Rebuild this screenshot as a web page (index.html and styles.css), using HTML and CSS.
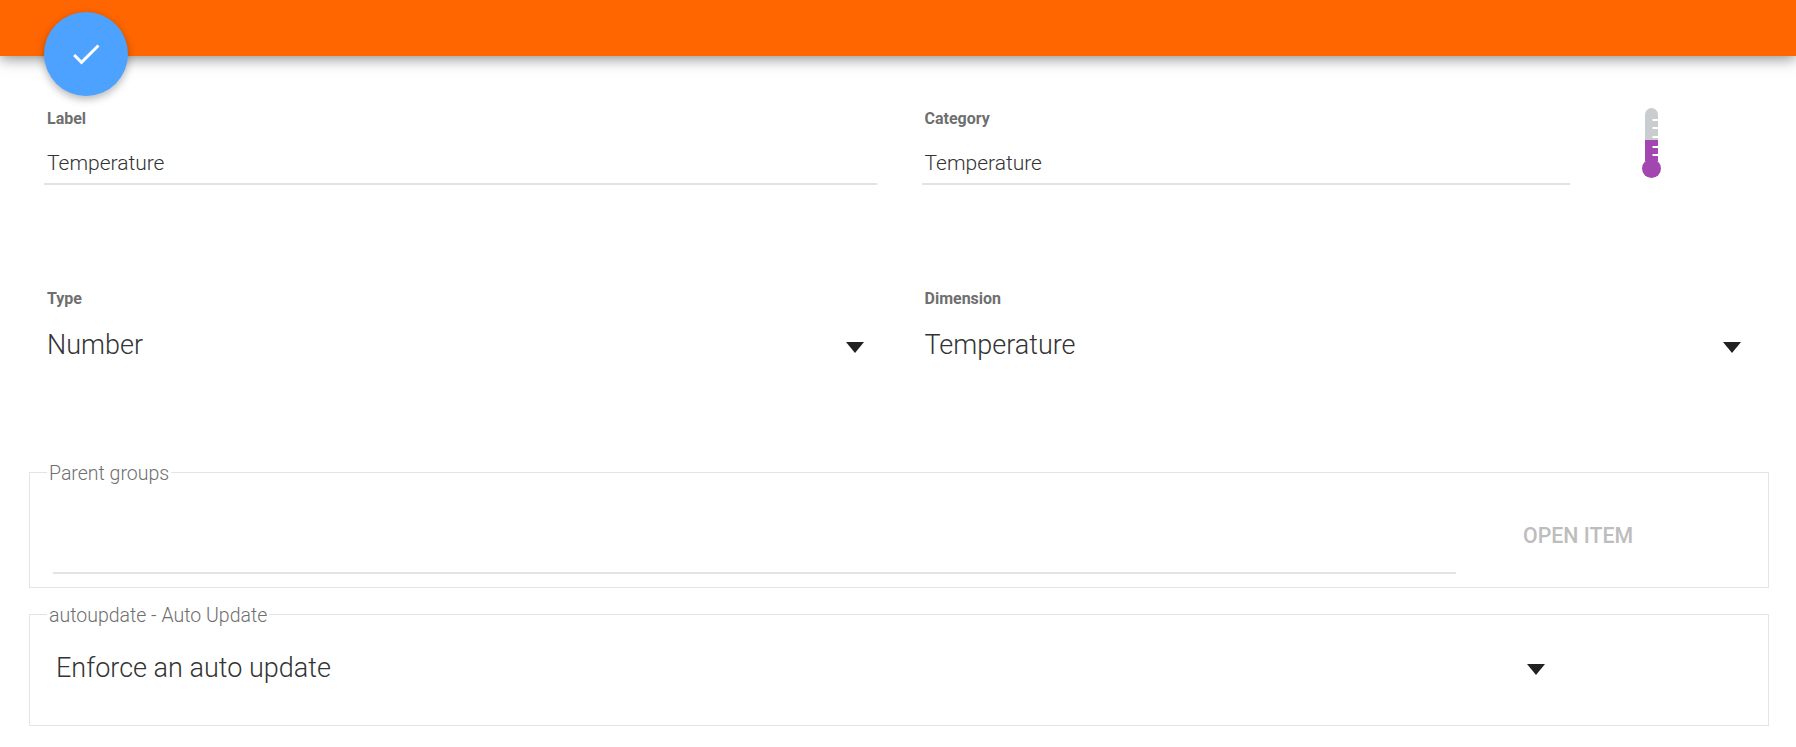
FILE: index.html
```html
<!DOCTYPE html>
<html lang="en">
<head>
<meta charset="utf-8">
<title>Item</title>
<link rel="stylesheet" href="styles.css">
</head>
<body>
<header class="topbar"></header>
<button class="fab" aria-label="Save">
  <svg class="fab-icon" viewBox="0 0 24 24"><path d="M9 16.17L4.83 12l-1.42 1.41L9 19 21 7l-1.41-1.41z"/></svg>
</button>
<main class="form">
  <section class="row row-text">
    <div class="field field-label">
      <div class="field-title">Label</div>
      <div class="field-value">Temperature</div>
    </div>
    <div class="field field-category">
      <div class="field-title">Category</div>
      <div class="field-value">Temperature</div>
    </div>
    <svg class="thermo" viewBox="0 0 20 72">
      <path class="thermo-empty" d="M3 32V6.500a6.500 6.500 0 0 1 13 0V32z"/>
      <path class="thermo-fill" d="M3 32h13v21h-13z"/>
      <circle class="thermo-fill" cx="9.500" cy="60.500" r="9.500"/>
      <path class="thermo-ticks" d="M10.500 11h5.500v2h-5.500zM10.500 19h5.500v2h-5.500zM10.500 28h5.500v2h-5.500zM10.500 38h5.500v2h-5.500zM10.500 46h5.500v2h-5.500z"/>
    </svg>
  </section>
  <section class="row row-select">
    <div class="select select-type">
      <div class="select-body">
        <div class="field-title">Type</div>
        <div class="select-value">Number</div>
      </div>
      <span class="arrow"></span>
    </div>
    <div class="select select-dim">
      <div class="select-body">
        <div class="field-title">Dimension</div>
        <div class="select-value">Temperature</div>
      </div>
      <span class="arrow"></span>
    </div>
  </section>
  <fieldset class="group group-parent">
    <legend class="group-title">Parent groups</legend>
    <div class="group-input"></div>
    <div class="open-item">OPEN ITEM</div>
  </fieldset>
  <fieldset class="group group-auto">
    <legend class="group-title">autoupdate - Auto Update</legend>
    <div class="auto-row">
      <div class="select-value">Enforce an auto update</div>
      <span class="arrow"></span>
    </div>
  </fieldset>
</main>
</body>
</html>
```
FILE: styles.css
```css
* { box-sizing: border-box; }
html, body { margin: 0; padding: 0; background: #fff; overflow: hidden; }
body { height: 747px; font-family: Roboto, "Liberation Sans", sans-serif; color: #333; position: relative; }

.topbar {
  height: 56px;
  background: #ff6600;
  box-shadow: 0 2px 14px rgba(0,0,0,.5);
}

.fab {
  position: absolute;
  left: 44px;
  top: 12px;
  width: 84px;
  height: 84px;
  border: 0;
  border-radius: 50%;
  background: #4da2ff;
  box-shadow: 0 3px 8px rgba(0,0,0,.3);
  display: flex;
  align-items: center;
  justify-content: center;
  padding: 0;
}
.fab-icon { width: 36px; height: 36px; fill: #fff; }

.form { display: flex; flex-direction: column; }

.row { display: flex; }
.row-text { height: 165px; padding: 53px 0 0 44px; }
.row-select { height: 239px; padding-left: 44px; padding-top: 68px; }

.field { height: 76px; border-bottom: 2px solid #e3e3e3; padding-left: 3px; }
.field-label { width: 833px; margin-right: 45px; }
.field-category { width: 648px; padding-left: 2.500px; }

.field-title { font-size: 16px; font-weight: 700; line-height: 20px; color: #6f6f6f; }
.field-value { font-size: 21px; font-weight: 300; line-height: 28px; margin-top: 20px; color: #333; }

.thermo { width: 20px; height: 72px; margin: -1px 0 0 71.500px; flex: none; }
.thermo-empty { fill: #c9cdcf; }
.thermo-fill { fill: #a347b0; }
.thermo-ticks { fill: #fff; }

.select { display: flex; justify-content: space-between; padding-left: 3px; }
.select-type { width: 833px; margin-right: 45px; padding-right: 13px; }
.select-dim { width: 834px; padding-left: 2.500px; padding-right: 15px; }
.select-body { flex: 1; }
.select-value { font-size: 27px; font-weight: 300; line-height: 34px; margin-top: 19px; color: #333; }

.arrow {
  width: 0;
  height: 0;
  margin-top: 53px;
  border-left: 9.500px solid transparent;
  border-right: 9.500px solid transparent;
  border-top: 11px solid #212121;
}

.group {
  margin: 0 0 0 29px;
  width: 1740px;
  padding: 0;
  border: 1px solid #e4e4e4;
  min-width: 0;
}
.group-title { margin-left: 17px; padding: 4px 2px 0; font-size: 19.500px; font-weight: 300; line-height: 20px; color: #6f6f6f; }

.group-parent { height: 128px; display: flex; align-items: flex-start; }
.group-input { width: 1403px; height: 2px; background: #e3e3e3; margin: 88px 0 0 23px; flex: none; }
.open-item { margin: 40px 0 0 67px; font-size: 21.300px; font-weight: 500; line-height: 24px; color: #bdbdbd; }

.group-auto { height: 124px; margin-top: 14px; }
.auto-row { display: flex; padding-left: 26px; }
.auto-row .select-value { margin-top: 25px; width: 1471px; flex: none; }
.auto-row .arrow { margin-top: 38px; }
```
